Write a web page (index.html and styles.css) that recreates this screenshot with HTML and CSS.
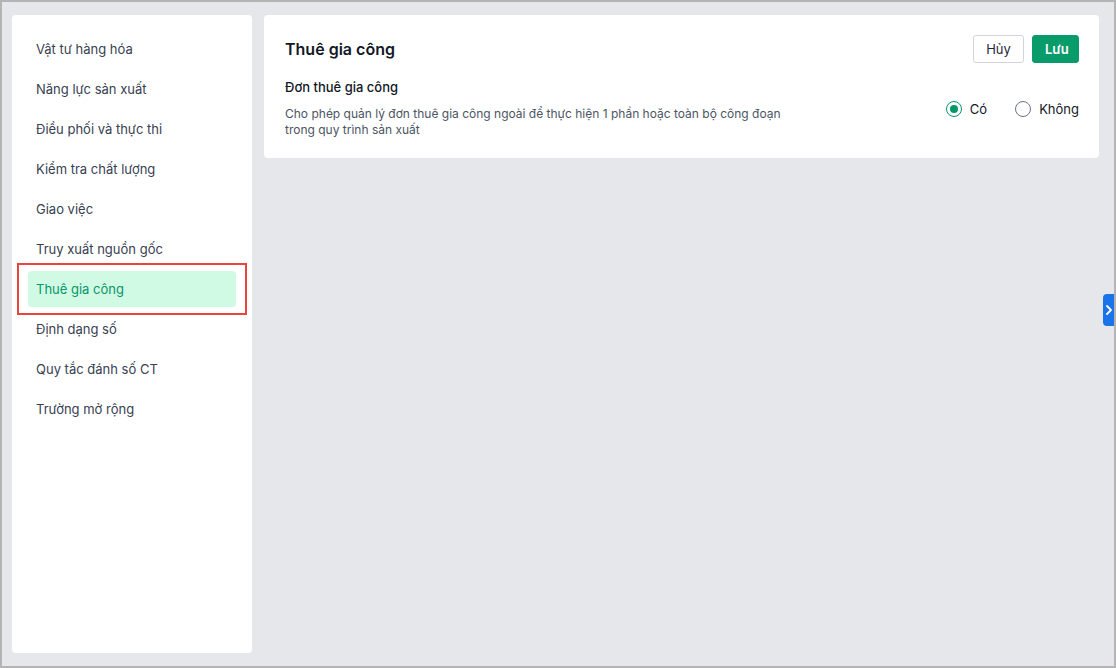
FILE: index.html
```html
<!DOCTYPE html>
<html lang="vi">
<head>
<meta charset="utf-8">
<title>Thuê gia công</title>
<link rel="stylesheet" href="styles.css">
</head>
<body>
<div class="frame">
  <nav class="sidebar">
    <a class="nav-item">Vật tư hàng hóa</a>
    <a class="nav-item">Năng lực sản xuất</a>
    <a class="nav-item">Điều phối và thực thi</a>
    <a class="nav-item">Kiểm tra chất lượng</a>
    <a class="nav-item">Giao việc</a>
    <a class="nav-item">Truy xuất nguồn gốc</a>
    <a class="nav-item active">Thuê gia công</a>
    <a class="nav-item">Định dạng số</a>
    <a class="nav-item">Quy tắc đánh số CT</a>
    <a class="nav-item">Trường mở rộng</a>
  </nav>
  <main class="content">
    <section class="card">
      <div class="card-head">
        <h1 class="title">Thuê gia công</h1>
        <div class="actions">
          <button class="btn btn-outline">Hủy</button>
          <button class="btn btn-primary">Lưu</button>
        </div>
      </div>
      <div class="setting">
        <div class="setting-text">
          <div class="setting-label">Đơn thuê gia công</div>
          <p class="setting-desc">Cho phép quản lý đơn thuê gia công ngoài để thực hiện 1 phần hoặc toàn bộ công đoạn trong quy trình sản xuất</p>
        </div>
        <div class="radios">
          <label class="radio"><span class="dot checked"></span>Có</label>
          <label class="radio"><span class="dot"></span>Không</label>
        </div>
      </div>
    </section>
  </main>
  <div class="side-tab">
    <svg width="8" height="12" viewBox="0 0 8 12"><path d="M2 2 L6 6 L2 10" fill="none" stroke="#fff" stroke-width="1.8" stroke-linecap="round" stroke-linejoin="round"/></svg>
  </div>
</div>
</body>
</html>
```

FILE: styles.css
```css
* { box-sizing: border-box; }
html, body { margin: 0; padding: 0; }
body {
  font-family: Inter, "Noto Sans", "Liberation Sans", sans-serif;
  color: #374151;
}
.frame {
  position: relative;
  width: 1116px;
  height: 668px;
  border: 2px solid #b4b4b4;
  background: #e5e7eb;
  padding: 13px 15px 13px 10px;
  display: flex;
  gap: 12px;
}
.sidebar {
  width: 240px;
  background: #fff;
  border-radius: 4px;
  padding: 16px;
  display: flex;
  flex-direction: column;
  gap: 4px;
}
.nav-item {
  position: relative;
  height: 36px;
  display: flex;
  align-items: center;
  padding-left: 8px;
  font-size: 13px;
  color: #374151;
  border-radius: 4px;
}
.nav-item.active {
  background: #d1fae5;
  color: #059669;
}
.nav-item.active::after {
  content: "";
  position: absolute;
  left: -11px;
  right: -11px;
  top: -8px;
  bottom: -8px;
  border: 2px solid #e8453c;
}
.content {
  flex: 1;
  display: flex;
  flex-direction: column;
}
.card {
  background: #fff;
  border-radius: 4px;
  padding: 20px 20px 20px 21px;
}
.card-head {
  display: flex;
  justify-content: space-between;
  align-items: center;
  height: 28px;
}
.title {
  margin: 0;
  font-size: 16px;
  font-weight: 600;
  color: #111827;
}
.actions { display: flex; gap: 8px; }
.btn {
  height: 28px;
  border-radius: 3px;
  font-family: inherit;
  font-size: 13px;
  padding: 0 12px;
  cursor: pointer;
}
.btn-outline {
  background: #fff;
  border: 1px solid #d1d5db;
  color: #1f2937;
  width: 51px;
}
.btn-primary {
  background: #0a9b6b;
  border: 1px solid #0a9b6b;
  color: #fff;
  font-weight: 600;
  width: 47px;
}
.setting {
  margin-top: 15px;
  display: flex;
  justify-content: space-between;
  align-items: center;
}
.setting-label {
  font-size: 13px;
  font-weight: 500;
  line-height: 18px;
  color: #111827;
}
.setting-desc {
  margin: 10px 0 0;
  width: 505px;
  font-size: 12px;
  line-height: 16px;
  color: #4b5563;
}
.radios {
  display: flex;
  gap: 28px;
  padding-top: 2px;
}
.radio {
  display: flex;
  align-items: center;
  gap: 8px;
  font-size: 13px;
  color: #111827;
}
.dot {
  width: 16px;
  height: 16px;
  border-radius: 50%;
  border: 1px solid #6b7280;
  display: inline-flex;
  align-items: center;
  justify-content: center;
}
.dot.checked { border-color: #059669; }
.dot.checked::after {
  content: "";
  width: 8px;
  height: 8px;
  border-radius: 50%;
  background: #059669;
}
.side-tab {
  position: absolute;
  right: 0;
  top: 292px;
  width: 11px;
  height: 32px;
  background: #1a73e8;
  border-radius: 4px 0 0 4px;
  display: flex;
  align-items: center;
  justify-content: center;
}
```
